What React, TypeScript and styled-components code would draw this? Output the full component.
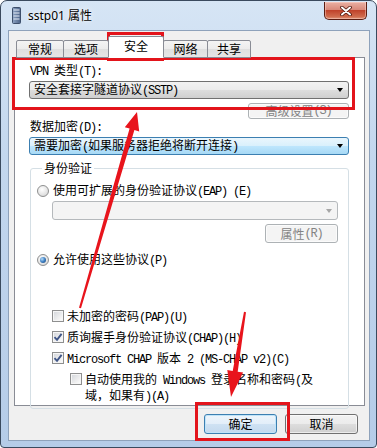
import React from 'react';
import styled, { createGlobalStyle } from 'styled-components';

const GlobalStyle = createGlobalStyle`
  html, body { margin: 0; padding: 0; background: #fff; }
  body {
    font-family: "Noto Sans CJK SC", "Noto Sans", sans-serif;
    font-size: 12px;
    color: #000;
  }
  * { box-sizing: border-box; }
`;

const Screen = styled.div`
  position: relative;
  width: 377px;
  height: 448px;
  overflow: hidden;
`;

const Window = styled.div`
  width: 377px;
  height: 448px;
  display: flex;
  flex-direction: column;
  border: 1px solid #3a4a5e;
  border-radius: 7px 7px 4px 4px;
  background: linear-gradient(180deg, #d6e5f5 0%, #c3d7ee 35%, #b5cce8 100%);
  padding: 0 6px 6px 7px;
`;

const TitleBar = styled.div`
  height: 29px;
  display: flex;
  align-items: center;
  padding-left: 4px;
`;

const TitleText = styled.span`
  margin-left: 7px;
  font-family: "Noto Sans", "Noto Sans CJK SC", sans-serif;
  font-size: 12px;
  line-height: 14px;
  text-shadow: 0 0 6px rgba(255, 255, 255, 0.95), 0 0 2px rgba(255, 255, 255, 0.9);
`;

const CloseButton = styled.div`
  align-self: flex-start;
  margin: 1px 3px 0 auto;
  width: 43px;
  height: 18px;
  border: 1px solid #5a1d12;
  border-top: none;
  border-radius: 0 0 5px 5px;
  background: linear-gradient(180deg, #eab0a3 0%, #d9897a 45%, #c0432b 50%, #cf6a4c 85%, #e0957a 100%);
  box-shadow: inset 0 0 0 1px rgba(255, 220, 210, 0.45);
  display: flex;
  align-items: center;
  justify-content: center;
`;

const Client = styled.div`
  flex: 1;
  display: flex;
  flex-direction: column;
  background: #f0f0f0;
  border: 1px solid #8ea2bb;
  padding: 5px 4px 0 5px;
`;

const TabStrip = styled.div`
  position: relative;
  z-index: 1;
  height: 22px;
  margin-bottom: -1px;
  padding-left: 2px;
  display: flex;
  align-items: flex-end;
`;

const Tab = styled.div<{ $w: number; $active?: boolean }>`
  width: ${p => p.$w}px;
  height: ${p => (p.$active ? 22 : 18)}px;
  margin-left: -1px;
  &:first-child { margin-left: 0; }
  position: relative;
  z-index: ${p => (p.$active ? 2 : 1)};
  border: 1px solid #898c95;
  border-bottom-color: ${p => (p.$active ? '#fff' : '#898c95')};
  border-radius: 2px 2px 0 0;
  background: ${p =>
    p.$active ? '#fff' : 'linear-gradient(180deg, #f4f4f4 0%, #ececec 50%, #dfdfdf 51%, #e6e6e6 100%)'};
  display: flex;
  align-items: center;
  justify-content: center;
  padding-bottom: ${p => (p.$active ? 3 : 0)}px;
  font-size: 12px;
  line-height: 14px;
`;

const Panel = styled.div`
  height: 349px;
  background: #fff;
  border: 1px solid #898c95;
  display: flex;
  flex-direction: column;
  padding: 5px 15px 0 14px;
`;

const Label = styled.div`
  margin-left: 1px;
  line-height: 14px;
  white-space: nowrap;
`;

const Latin = styled.span`
  font-family: "Liberation Mono", monospace;
  font-size: 12px;
  letter-spacing: -1.2px;
  white-space: pre;
`;

type ComboState = 'normal' | 'focus' | 'disabled';

const comboBg: Record<ComboState, string> = {
  normal: 'linear-gradient(180deg, #f2f2f2 0%, #ebebeb 50%, #dddddd 51%, #cfcfcf 100%)',
  focus: 'linear-gradient(180deg, #eaf6fd 0%, #d9f0fc 50%, #bee6fd 51%, #a7d9f5 100%)',
  disabled: '#f4f4f4',
};

const comboBorder: Record<ComboState, string> = {
  normal: '#707070',
  focus: '#3c7fb1',
  disabled: '#b5b9bc',
};

const Combo = styled.div<{ $state: ComboState; $top?: number }>`
  height: 19px;
  margin-top: ${p => p.$top ?? 2}px;
  border: 1px solid ${p => comboBorder[p.$state]};
  border-radius: 3px;
  background: ${p => comboBg[p.$state]};
  display: flex;
  align-items: center;
  padding: 0 5px 0 4px;
  line-height: 14px;
  white-space: nowrap;
`;

const ComboText = styled.span`
  flex: 1;
`;

const Arrow = styled.span<{ $disabled?: boolean }>`
  width: 0;
  height: 0;
  border-left: 3.5px solid transparent;
  border-right: 3.5px solid transparent;
  border-top: 4px solid ${p => (p.$disabled ? '#a6a6a6' : '#000')};
`;

type BtnKind = 'normal' | 'default' | 'disabled';

const btnBg: Record<BtnKind, string> = {
  normal: 'linear-gradient(180deg, #f2f2f2 0%, #ebebeb 50%, #dddddd 51%, #cfcfcf 100%)',
  default: 'linear-gradient(180deg, #eef5fb 0%, #e2eef9 50%, #cfe2f3 51%, #c3d9ee 100%)',
  disabled: '#f4f4f4',
};

const Button = styled.div<{ $w: number; $h?: number; $kind: BtnKind; $top?: number }>`
  width: ${p => p.$w}px;
  height: ${p => p.$h ?? 20}px;
  margin-top: ${p => p.$top ?? 0}px;
  align-self: flex-end;
  border: 1px solid ${p => (p.$kind === 'disabled' ? '#adb2b5' : p.$kind === 'default' ? '#3c7fb1' : '#707070')};
  border-radius: 3px;
  background: ${p => btnBg[p.$kind]};
  box-shadow: ${p => (p.$kind === 'default' ? 'inset 0 0 0 1px #bfe4f9' : 'inset 0 0 0 1px rgba(255,255,255,0.6)')};
  color: ${p => (p.$kind === 'disabled' ? '#838383' : '#000')};
  display: flex;
  align-items: center;
  justify-content: center;
  line-height: 14px;
  white-space: nowrap;
`;

const Group = styled.fieldset`
  margin: 7px 0 0 1px;
  padding: 0 10px 4px 6px;
  border: 1px solid #d5dfe5;
  border-radius: 3px;
  min-width: 0;
`;

const Legend = styled.legend`
  margin-left: 5px;
  padding: 0 2px;
  line-height: 12px;
`;

const OptionRow = styled.div<{ $top: number }>`
  display: flex;
  align-items: center;
  gap: 4px;
  margin-top: ${p => p.$top}px;
  line-height: 14px;
  white-space: nowrap;
`;

const Radio = styled.span<{ $on?: boolean }>`
  flex: none;
  width: 12px;
  height: 12px;
  border-radius: 50%;
  border: 1px solid #8e8f8f;
  background: radial-gradient(circle at 40% 35%, #ffffff 0%, #e6e6e6 55%, #cdcdcd 100%);
  display: flex;
  align-items: center;
  justify-content: center;
  &::after {
    content: '';
    display: ${p => (p.$on ? 'block' : 'none')};
    width: 6px;
    height: 6px;
    border-radius: 50%;
    background: radial-gradient(circle at 35% 35%, #b6dcfa 0%, #3d7fc2 50%, #183f6e 100%);
  }
`;

const EapBlock = styled.div`
  margin-left: 15px;
  display: flex;
  flex-direction: column;
`;

const CheckList = styled.div`
  margin-top: 41px;
  padding-left: 15px;
  display: flex;
  flex-direction: column;
  gap: 5px;
`;

const CheckRow = styled.div<{ $indent?: number; $lh?: number }>`
  display: flex;
  align-items: flex-start;
  gap: 3px;
  margin-left: ${p => p.$indent ?? 0}px;
  line-height: ${p => p.$lh ?? 14}px;
  white-space: nowrap;
`;

const CheckBox = styled.span<{ $lh?: number }>`
  flex: none;
  width: 12px;
  height: 12px;
  margin-top: ${p => ((p.$lh ?? 14) - 12) / 2}px;
  border: 1px solid #8e8f8f;
  background: linear-gradient(135deg, #d2d5da 0%, #f2f2f2 70%, #ffffff 100%);
  box-shadow: inset 0 0 0 1px #f6f6f6;
  display: flex;
  align-items: center;
  justify-content: center;
`;

const Footer = styled.div`
  display: flex;
  justify-content: flex-end;
  gap: 8px;
  margin-top: 8px;
  padding-right: 7px;
`;

const Mark = styled.div<{ $x: number; $y: number; $w: number; $h: number }>`
  position: absolute;
  left: ${p => p.$x}px;
  top: ${p => p.$y}px;
  width: ${p => p.$w}px;
  height: ${p => p.$h}px;
  border: 3px solid #e3141b;
  pointer-events: none;
`;

const ArrowLayer = styled.svg`
  position: absolute;
  left: 0;
  top: 0;
  pointer-events: none;
`;

const Mixed: React.FC<{ text: string }> = ({ text }) => (
  <>
    {text
      .split(/([ -~]+)/)
      .filter(Boolean)
      .map((part, i) =>
        /^[ -~]+$/.test(part) ? <Latin key={i}>{part}</Latin> : <span key={i}>{part}</span>
      )}
  </>
);

const Tick = () => (
  <svg width="10" height="10" viewBox="0 0 10 10">
    <path d="M1.5 5.2 L4 7.8 L8.6 1.8" fill="none" stroke="#3f5587" strokeWidth="1.9" />
  </svg>
);

const tabs = [
  { label: '常规', w: 48 },
  { label: '选项', w: 46 },
  { label: '安全', w: 56, active: true },
  { label: '网络', w: 45 },
  { label: '共享', w: 44 },
];

const App: React.FC = () => (
  <Screen>
    <GlobalStyle />
    <Window>
      <TitleBar>
        <svg width="9" height="17" viewBox="0 0 9 17">
          <defs>
            <linearGradient id="ico" x1="0" x2="1">
              <stop offset="0" stopColor="#8ea4c4" />
              <stop offset="1" stopColor="#4b6287" />
            </linearGradient>
          </defs>
          <rect x="0.5" y="0.5" width="8" height="16" rx="1" fill="url(#ico)" stroke="#3d4f6b" />
          {[3, 6, 9, 12].map(y => (
            <line key={y} x1="1.5" x2="7.5" y1={y} y2={y} stroke="#e8eef7" strokeWidth="1" />
          ))}
        </svg>
        <TitleText>sstp01 属性</TitleText>
        <CloseButton>
          <svg width="12" height="10" viewBox="0 0 12 10">
            <path d="M2 1.5 L10 8.5 M10 1.5 L2 8.5" stroke="#4a1309" strokeWidth="3.6" strokeLinecap="round" />
            <path d="M2 1.5 L10 8.5 M10 1.5 L2 8.5" stroke="#fff" strokeWidth="2" strokeLinecap="round" />
          </svg>
        </CloseButton>
      </TitleBar>

      <Client>
        <TabStrip>
          {tabs.map(t => (
            <Tab key={t.label} $w={t.w} $active={t.active}>
              {t.label}
            </Tab>
          ))}
        </TabStrip>

        <Panel>
          <Label>
            <Mixed text="VPN 类型(T):" />
          </Label>
          <Combo $state="normal">
            <ComboText>
              <Mixed text="安全套接字隧道协议(SSTP)" />
            </ComboText>
            <Arrow />
          </Combo>
          <Button $w={101} $h={18} $kind="disabled" $top={4}>
            <Mixed text="高级设置(S)" />
          </Button>

          <Label>
            <Mixed text="数据加密(D):" />
          </Label>
          <Combo $state="focus">
            <ComboText>
              <Mixed text="需要加密(如果服务器拒绝将断开连接)" />
            </ComboText>
            <Arrow />
          </Combo>

          <Group>
            <Legend>身份验证</Legend>
            <OptionRow $top={9}>
              <Radio />
              <span>
                <Mixed text="使用可扩展的身份验证协议(EAP) (E)" />
              </span>
            </OptionRow>
            <EapBlock>
              <Combo $state="disabled">
                <ComboText />
                <Arrow $disabled />
              </Combo>
              <Button $w={73} $h={19} $kind="disabled" $top={4}>
                <Mixed text="属性(R)" />
              </Button>
            </EapBlock>
            <OptionRow $top={9}>
              <Radio $on />
              <span>
                <Mixed text="允许使用这些协议(P)" />
              </span>
            </OptionRow>

            <CheckList>
              <CheckRow>
                <CheckBox />
                <span>
                  <Mixed text="未加密的密码(PAP)(U)" />
                </span>
              </CheckRow>
              <CheckRow>
                <CheckBox>
                  <Tick />
                </CheckBox>
                <span>
                  <Mixed text="质询握手身份验证协议(CHAP)(H)" />
                </span>
              </CheckRow>
              <CheckRow>
                <CheckBox>
                  <Tick />
                </CheckBox>
                <span>
                  <Mixed text="Microsoft CHAP 版本 2 (MS-CHAP v2)(C)" />
                </span>
              </CheckRow>
              <CheckRow $indent={18} $lh={13}>
                <CheckBox $lh={13} />
                <span>
                  <Mixed text="自动使用我的 Windows 登录名称和密码(及" />
                  <br />
                  <Mixed text="域，如果有)(A)" />
                </span>
              </CheckRow>
            </CheckList>
          </Group>
        </Panel>

        <Footer>
          <Button $w={73} $kind="default">确定</Button>
          <Button $w={73} $kind="normal">取消</Button>
        </Footer>
      </Client>
    </Window>

    <Mark $x={107} $y={32} $w={57} $h={29} />
    <Mark $x={12} $y={57} $w={343} $h={53} />
    <Mark $x={195} $y={402} $w={95} $h={39} />

    <ArrowLayer width="377" height="448" viewBox="0 0 377 448">
      <polygon
        points="79,307.7 129.6,128.6 124.8,127.2 137,112 139.2,131.4 134.4,130 81,308.3"
        fill="#e8141c"
      />
      <polygon
        points="244,311.8 232.7,370.9 227.3,370 231,397 243.1,372.6 237.7,371.7 246,312.2"
        fill="#e8141c"
      />
    </ArrowLayer>
  </Screen>
);

export default App;
